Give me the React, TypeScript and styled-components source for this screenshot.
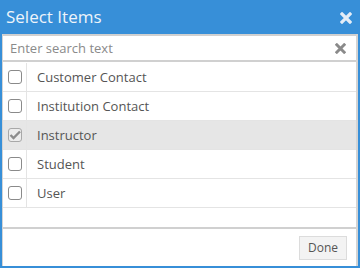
import styled, { createGlobalStyle } from "styled-components";

const items = [
  { label: "Customer Contact", checked: false },
  { label: "Institution Contact", checked: false },
  { label: "Instructor", checked: true },
  { label: "Student", checked: false },
  { label: "User", checked: false },
];

const blue = "#378fd8";

function App() {
  return (
    <>
      <GlobalStyle />
      <Dialog>
        <Header>
          <Title>Select Items</Title>
          <CloseIcon color="#e4edf7" />
        </Header>
        <Body>
          <Search>
            <SearchInput placeholder="Enter search text" />
            <CloseIcon color="#8a8a8a" size={11} />
          </Search>
          <List>
            {items.map((item) => (
              <Row key={item.label} selected={item.checked}>
                <CheckCell>
                  <Box checked={item.checked}>
                    {item.checked && (
                      <svg width="12" height="10" viewBox="0 0 12 10">
                        <path
                          d="M1.5 5 L4.5 8 L11 1.5"
                          fill="none"
                          stroke="#8c8c8c"
                          strokeWidth="2.4"
                        />
                      </svg>
                    )}
                  </Box>
                </CheckCell>
                <Label>{item.label}</Label>
              </Row>
            ))}
          </List>
          <Footer>
            <DoneButton>Done</DoneButton>
          </Footer>
        </Body>
      </Dialog>
    </>
  );
}

function CloseIcon({ color, size = 12 }: { color: string; size?: number }) {
  return (
    <svg width={size} height={size} viewBox="0 0 12 12">
      <path
        d="M2 2 L10 10 M10 2 L2 10"
        stroke={color}
        strokeWidth="3.2"
        strokeLinecap="square"
      />
    </svg>
  );
}

const GlobalStyle = createGlobalStyle`
  body {
    margin: 0;
    font-family: "Open Sans", "Liberation Sans", sans-serif;
  }
`;

const Dialog = styled.div`
  width: 360px;
  height: 268px;
  box-sizing: border-box;
  background: ${blue};
  padding: 0 2px 2px 2px;
  display: flex;
  flex-direction: column;
`;

const Header = styled.div`
  height: 34px;
  display: flex;
  align-items: center;
  justify-content: space-between;
  padding: 0 6px 0 4px;
  svg {
    margin-top: 1px;
  }
`;

const Title = styled.div`
  color: #eef4fa;
  font-size: 17px;
  line-height: 34px;
`;

const Body = styled.div`
  flex: 1;
  background: #fff;
  display: flex;
  flex-direction: column;
  border-left: 1px solid #d4d4d4;
  border-right: 2px solid #d4d4d4;
`;

const Search = styled.div`
  height: 24px;
  border-top: 2px solid #d0d0d0;
  border-bottom: 2px solid #d0d0d0;
  display: flex;
  align-items: center;
  padding: 0 10px 0 7px;
`;

const SearchInput = styled.input`
  flex: 1;
  border: none;
  outline: none;
  font-family: inherit;
  font-size: 13px;
  color: #444;
  padding: 0;
  &::placeholder {
    color: #8a8a8a;
  }
`;

const List = styled.div`
  flex: 1;
  border-top: 1px solid #fff;
`;

const Row = styled.div<{ selected: boolean }>`
  height: 28px;
  display: flex;
  border-bottom: 1px solid #e4e4e4;
  background: ${(p) => (p.selected ? "#e6e6e6" : "#fff")};
`;

const CheckCell = styled.div`
  width: 23px;
  border-right: 1px solid #e4e4e4;
  display: flex;
  align-items: center;
  justify-content: center;
`;

const Box = styled.div<{ checked: boolean }>`
  width: 12px;
  height: 12px;
  border: 1.5px solid ${(p) => (p.checked ? "#a8a8a8" : "#8a8a8a")};
  border-radius: 3px;
  background: ${(p) => (p.checked ? "#ececec" : "#fff")};
  display: flex;
  align-items: center;
  justify-content: center;
`;

const Label = styled.div`
  display: flex;
  align-items: center;
  padding-left: 10px;
  font-size: 13px;
  color: #555;
`;

const Footer = styled.div`
  height: 37px;
  border-top: 2px solid #d0d0d0;
  display: flex;
  align-items: center;
  justify-content: flex-end;
  padding-right: 9px;
`;

const DoneButton = styled.button`
  width: 48px;
  height: 24px;
  border: 1px solid #dcdcdc;
  background: #f3f3f3;
  color: #555;
  font-family: inherit;
  font-size: 12px;
  padding: 0;
  border-radius: 0;
`;

export default App;
